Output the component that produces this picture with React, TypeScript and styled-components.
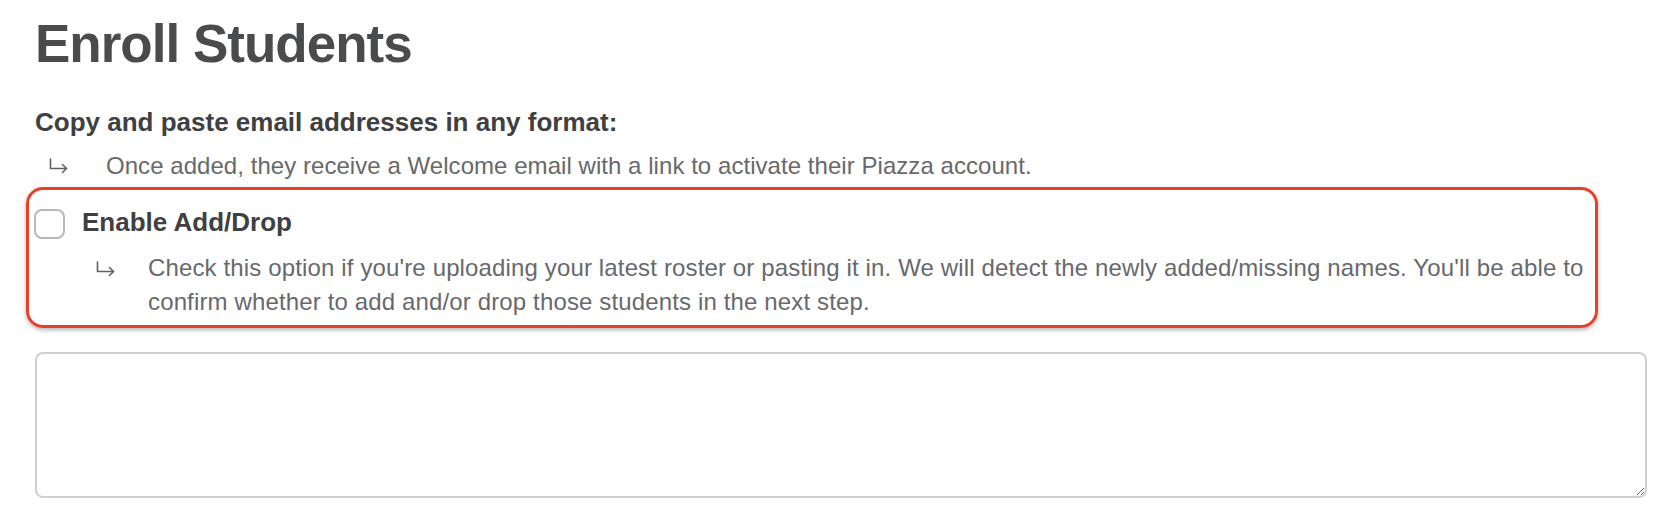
import React from 'react'
import styled, { createGlobalStyle } from 'styled-components'

const Global = createGlobalStyle`
    body {
        margin: 0;
        background: #ffffff;
        font-family: "Liberation Sans", Arial, sans-serif;
    }
`

const Page = styled.div`
    padding: 12px 15px 0 35px;
    display: flex;
    flex-direction: column;
`

const Title = styled.h1`
    margin: 0;
    font-size: 53px;
    line-height: 64px;
    letter-spacing: -1px;
    font-weight: bold;
    color: #4a4b4d;
`

const Lead = styled.h3`
    margin: 30px 0 0 0;
    font-size: 26px;
    line-height: 32px;
    font-weight: bold;
    color: #3f4042;
`

const Note = styled.div< { nested?: boolean } >`
    display: grid;
    grid-template-columns: ${ p => p.nested ? 53 : 58 }px 1fr;
    padding-left: ${ p => p.nested ? 61 : 13 }px;
    margin-top: ${ p => p.nested ? 12 : 10 }px;
    font-size: 24px;
    line-height: ${ p => p.nested ? 34 : 35 }px;
    letter-spacing: ${ p => p.nested ? 0.14 : 0.05 }px;
    color: #68696b;
    > svg {
        margin-top: 10px;
    }
`

const Highlight = styled.div`
    margin: 4px 49px 0 -9px;
    border: 3px solid #e7402a;
    border-radius: 17px;
    box-shadow: 0 2px 4px rgba( 0, 0, 0, 0.3 );
    padding: 16px 0 6px 5px;
    display: flex;
    flex-direction: column;
`

const CheckRow = styled.label`
    display: flex;
    align-items: flex-start;
    gap: 17px;
    line-height: 32px;
    > b {
        font-size: 26px;
        color: #3f4042;
    }
`

const Box = styled.span`
    margin-top: 3px;
    width: 31px; height: 30px;
    border: 2px solid #b5bac1;
    border-radius: 8px;
    box-sizing: border-box;
    background: #fff;
`

const Area = styled.textarea`
    margin-top: 24px;
    width: 100%;
    height: 146px;
    box-sizing: border-box;
    border: 2px solid #cdd1d5;
    border-radius: 8px;
    resize: vertical;
    font-family: inherit;
    font-size: 18px;
    outline: none;
`

const Arrow = () => <svg width="21" height="16" viewBox="0 0 21 16" fill="none" stroke="#5f6062" strokeWidth="1.6" strokeLinecap="round" strokeLinejoin="round">
    <path d="M2.5 1 V10.5 H18.5" />
    <path d="M14.5 6.5 L18.5 10.5 L14.5 14.5" />
</svg>

export default function App() {
    return <>
        <Global />
        <Page>
            <Title>Enroll Students</Title>
            <Lead>Copy and paste email addresses in any format:</Lead>
            <Note>
                <Arrow />
                <span>Once added, they receive a Welcome email with a link to activate their Piazza account.</span>
            </Note>
            <Highlight>
                <CheckRow>
                    <Box />
                    <b>Enable Add/Drop</b>
                </CheckRow>
                <Note nested>
                    <Arrow />
                    <span>Check this option if you're uploading your latest roster or pasting it in. We will detect the newly added/missing names. You'll be able to confirm whether to add and/or drop those students in the next step.</span>
                </Note>
            </Highlight>
            <Area />
        </Page>
    </>
}
